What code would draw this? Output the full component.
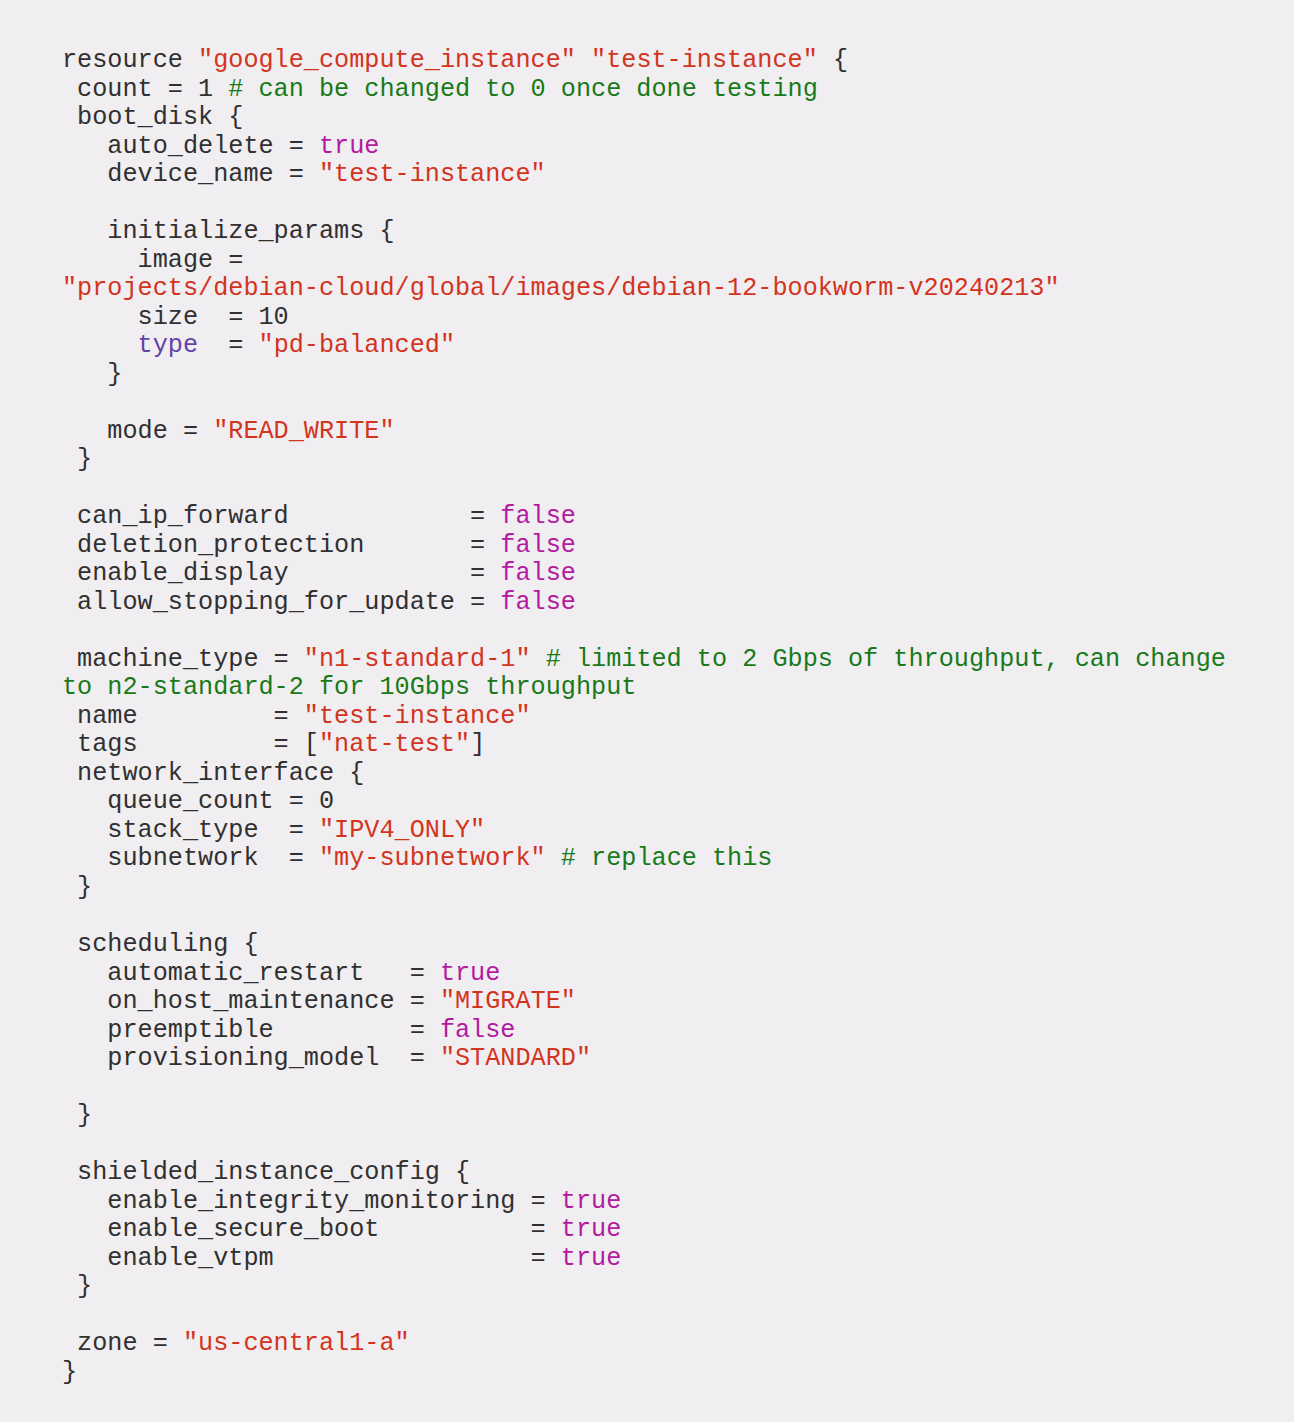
import React from "react";

type Tok = [string, string?];

const R = "text-[#d3341d]";
const G = "text-[#187a18]";
const M = "text-[#b31aa0]";
const P = "text-[#6443a8]";

const lines: Tok[][] = [
  [["resource "], ['"google_compute_instance"', R], [" "], ['"test-instance"', R], [" {"]],
  [[" count = 1 "], ["# can be changed to 0 once done testing", G]],
  [[" boot_disk {"]],
  [["   auto_delete = "], ["true", M]],
  [["   device_name = "], ['"test-instance"', R]],
  [],
  [["   initialize_params {"]],
  [["     image = "]],
  [['"projects/debian-cloud/global/images/debian-12-bookworm-v20240213"', R]],
  [["     size  = 10"]],
  [["     "], ["type", P], ["  = "], ['"pd-balanced"', R]],
  [["   }"]],
  [],
  [["   mode = "], ['"READ_WRITE"', R]],
  [[" }"]],
  [],
  [[" can_ip_forward            = "], ["false", M]],
  [[" deletion_protection       = "], ["false", M]],
  [[" enable_display            = "], ["false", M]],
  [[" allow_stopping_for_update = "], ["false", M]],
  [],
  [[" machine_type = "], ['"n1-standard-1"', R], [" "], ["# limited to 2 Gbps of throughput, can change", G]],
  [["to n2-standard-2 for 10Gbps throughput", G]],
  [[" name         = "], ['"test-instance"', R]],
  [[" tags         = ["], ['"nat-test"', R], ["]"]],
  [[" network_interface {"]],
  [["   queue_count = 0"]],
  [["   stack_type  = "], ['"IPV4_ONLY"', R]],
  [["   subnetwork  = "], ['"my-subnetwork"', R], [" "], ["# replace this", G]],
  [[" }"]],
  [],
  [[" scheduling {"]],
  [["   automatic_restart   = "], ["true", M]],
  [["   on_host_maintenance = "], ['"MIGRATE"', R]],
  [["   preemptible         = "], ["false", M]],
  [["   provisioning_model  = "], ['"STANDARD"', R]],
  [],
  [[" }"]],
  [],
  [[" shielded_instance_config {"]],
  [["   enable_integrity_monitoring = "], ["true", M]],
  [["   enable_secure_boot          = "], ["true", M]],
  [["   enable_vtpm                 = "], ["true", M]],
  [[" }"]],
  [],
  [[" zone = "], ['"us-central1-a"', R]],
  [["}"]],
];

export default function App() {
  return (
    <div className="min-h-[1422px] w-full bg-[#f0eef1] pt-[47px] pl-[62px]">
      <div
        className="text-[25.2px] leading-[28.53px] text-[#303030] whitespace-pre"
        style={{
          fontFamily:
            '"Courier New", "Nimbus Mono PS", "Nimbus Mono L", FreeMono, Courier, "Liberation Mono", monospace',
        }}
      >
        {lines.map((toks, i) => (
          <div key={i} className="h-[28.53px]">
            {toks.length === 0
              ? " "
              : toks.map(([t, c], j) => (
                  <span key={j} className={c}>
                    {t}
                  </span>
                ))}
          </div>
        ))}
      </div>
    </div>
  );
}
